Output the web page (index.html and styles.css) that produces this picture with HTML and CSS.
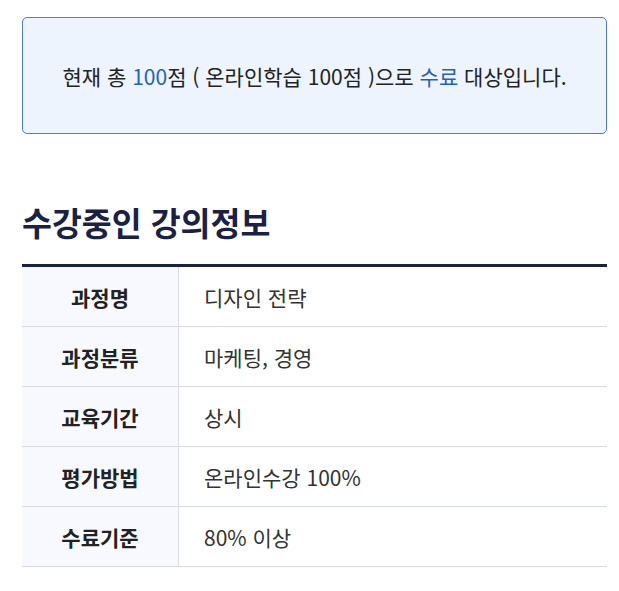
FILE: index.html
```html
<!DOCTYPE html>
<html lang="ko">
<head>
<meta charset="utf-8">
<link rel="stylesheet" href="styles.css">
</head>
<body>
<div class="page">
  <div class="notice">
    <p>현재 총 <span class="hl">100</span>점 ( 온라인학습 100점 )으로 <span class="hl">수료</span> 대상입니다.</p>
  </div>
  <h2 class="title">수강중인 강의정보</h2>
  <table class="info">
    <tr><th>과정명</th><td>디자인 전략</td></tr>
    <tr><th>과정분류</th><td>마케팅, 경영</td></tr>
    <tr><th>교육기간</th><td>상시</td></tr>
    <tr><th>평가방법</th><td>온라인수강 100%</td></tr>
    <tr><th>수료기준</th><td>80% 이상</td></tr>
  </table>
</div>
</body>
</html>
```
FILE: styles.css
```css
html, body {
  margin: 0;
  padding: 0;
  background: #fff;
}
body {
  font-family: "Noto Sans CJK KR", "Noto Sans", sans-serif;
  color: #222;
}
.page {
  padding: 17px 12px 0 22px;
}
.notice {
  box-sizing: border-box;
  height: 117px;
  border: 1px solid #4a80c6;
  border-radius: 5px;
  background: #edf4fe;
  display: flex;
  align-items: center;
  justify-content: center;
}
.notice p {
  margin: 0;
  font-size: 21px;
  color: #222;
}
.hl {
  color: #1f63b8;
}
.title {
  margin: 68px 0 0;
  font-size: 32.5px;
  font-weight: 700;
  line-height: 40px;
  color: #1a2142;
}
.info {
  margin-top: 22px;
  width: 100%;
  border-collapse: collapse;
  border-top: 3px solid #1a2142;
}
.info th, .info td {
  height: 59px;
  padding: 0;
  border-bottom: 1px solid #d9dce2;
  font-size: 21px;
}
.info th {
  width: 156px;
  background: #f7f9fe;
  border-right: 1px solid #d9dce2;
  font-weight: 700;
  color: #222;
  text-align: center;
}
.info td {
  padding-left: 25px;
  font-weight: 400;
  color: #333;
}
```
